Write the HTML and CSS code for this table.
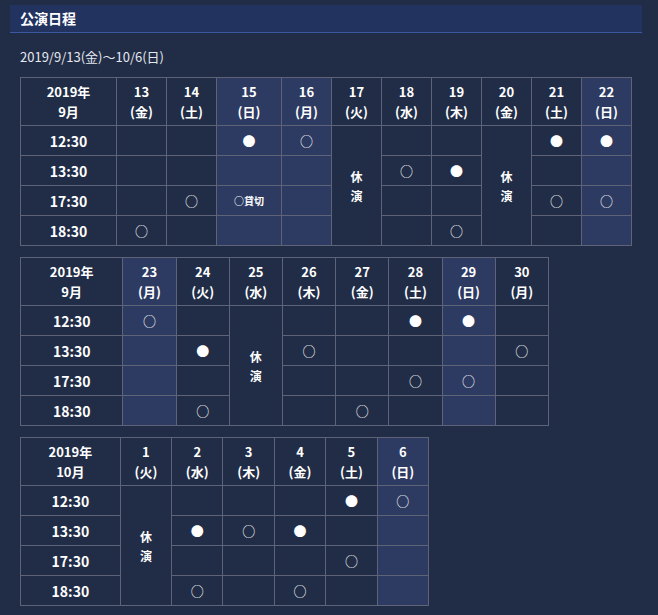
FILE: index.html
```html
<!DOCTYPE html>
<html lang="ja">
<head>
<meta charset="utf-8">
<title>公演日程</title>
<link rel="stylesheet" href="styles.css">
</head>
<body>
<section class="schedule">
  <h2 class="schedule-title">公演日程</h2>
  <p class="period">2019/9/13(金)〜10/6(日)</p>

  <table class="sched sched-1">
    <colgroup>
      <col class="c-head"><col class="c-day"><col class="c-day"><col class="c-wide"><col class="c-day"><col class="c-day"><col class="c-day"><col class="c-day"><col class="c-day"><col class="c-day"><col class="c-day">
    </colgroup>
    <thead>
      <tr>
        <th>2019年<br>9月</th>
        <th>13<br>(金)</th><th>14<br>(土)</th><th class="hol">15<br>(日)</th><th class="hol">16<br>(月)</th><th>17<br>(火)</th><th>18<br>(水)</th><th>19<br>(木)</th><th>20<br>(金)</th><th>21<br>(土)</th><th class="hol">22<br>(日)</th>
      </tr>
    </thead>
    <tbody>
      <tr>
        <th>12:30</th>
        <td></td><td></td><td class="hol">●</td><td class="hol">○</td><td class="off" rowspan="4">休<br>演</td><td></td><td></td><td class="off" rowspan="4">休<br>演</td><td>●</td><td class="hol">●</td>
      </tr>
      <tr>
        <th>13:30</th>
        <td></td><td></td><td class="hol"></td><td class="hol"></td><td>○</td><td>●</td><td></td><td class="hol"></td>
      </tr>
      <tr>
        <th>17:30</th>
        <td></td><td>○</td><td class="hol"><span class="note">○貸切</span></td><td class="hol"></td><td></td><td></td><td>○</td><td class="hol">○</td>
      </tr>
      <tr>
        <th>18:30</th>
        <td>○</td><td></td><td class="hol"></td><td class="hol"></td><td></td><td>○</td><td></td><td class="hol"></td>
      </tr>
    </tbody>
  </table>

  <table class="sched sched-2">
    <colgroup>
      <col class="c-head"><col class="c-day"><col class="c-day"><col class="c-day"><col class="c-day"><col class="c-day"><col class="c-day"><col class="c-day"><col class="c-day">
    </colgroup>
    <thead>
      <tr>
        <th>2019年<br>9月</th>
        <th class="hol">23<br>(月)</th><th>24<br>(火)</th><th>25<br>(水)</th><th>26<br>(木)</th><th>27<br>(金)</th><th>28<br>(土)</th><th class="hol">29<br>(日)</th><th>30<br>(月)</th>
      </tr>
    </thead>
    <tbody>
      <tr>
        <th>12:30</th>
        <td class="hol">○</td><td></td><td class="off" rowspan="4">休<br>演</td><td></td><td></td><td>●</td><td class="hol">●</td><td></td>
      </tr>
      <tr>
        <th>13:30</th>
        <td class="hol"></td><td>●</td><td>○</td><td></td><td></td><td class="hol"></td><td>○</td>
      </tr>
      <tr>
        <th>17:30</th>
        <td class="hol"></td><td></td><td></td><td></td><td>○</td><td class="hol">○</td><td></td>
      </tr>
      <tr>
        <th>18:30</th>
        <td class="hol"></td><td>○</td><td></td><td>○</td><td></td><td class="hol"></td><td></td>
      </tr>
    </tbody>
  </table>

  <table class="sched sched-3">
    <colgroup>
      <col class="c-head"><col class="c-day"><col class="c-day"><col class="c-day"><col class="c-day"><col class="c-day"><col class="c-day">
    </colgroup>
    <thead>
      <tr>
        <th>2019年<br>10月</th>
        <th>1<br>(火)</th><th>2<br>(水)</th><th>3<br>(木)</th><th>4<br>(金)</th><th>5<br>(土)</th><th class="hol">6<br>(日)</th>
      </tr>
    </thead>
    <tbody>
      <tr>
        <th>12:30</th>
        <td class="off" rowspan="4">休<br>演</td><td></td><td></td><td></td><td>●</td><td class="hol">○</td>
      </tr>
      <tr>
        <th>13:30</th>
        <td>●</td><td>○</td><td>●</td><td></td><td class="hol"></td>
      </tr>
      <tr>
        <th>17:30</th>
        <td></td><td></td><td></td><td>○</td><td class="hol"></td>
      </tr>
      <tr>
        <th>18:30</th>
        <td>○</td><td></td><td>○</td><td></td><td class="hol"></td>
      </tr>
    </tbody>
  </table>
</section>
</body>
</html>
```

FILE: styles.css
```css
html, body {
  margin: 0;
  padding: 0;
  background: #212d47;
}

body {
  font-family: "Noto Sans CJK JP", "Noto Sans", "Liberation Sans", sans-serif;
  color: #ffffff;
}

.schedule {
  margin: 5px 16px 0 10px;
}

.schedule-title {
  margin: 0;
  height: 27px;
  line-height: 27px;
  padding: 0 10px;
  font-size: 14px;
  font-weight: 700;
  background: #22335f;
  border-bottom: 1px solid #3b59a0;
}

.period {
  margin: 14px 0 0 10px;
  font-size: 13px;
  line-height: 20px;
  color: #e6e8ee;
}

.sched {
  border-collapse: collapse;
  table-layout: fixed;
  margin: 10px 0 0 10px;
  font-size: 13px;
  font-weight: 700;
  text-align: center;
}

.sched + .sched {
  margin-top: 11px;
}

.sched th,
.sched td {
  border: 1px solid #5e6377;
  padding: 0;
  text-align: center;
  vertical-align: middle;
}

.sched thead th {
  line-height: 20px;
  padding: 4px 0 3px;
  font-weight: 700;
}

.sched tbody th,
.sched tbody td {
  height: 29px;
  line-height: 20px;
}

.sched tbody th {
  font-size: 14px;
  font-weight: 700;
}

.sched tbody td {
  font-weight: 400;
  font-size: 13px;
}

.sched .hol {
  background: #2d3b63;
}

.sched td.off {
  font-size: 12px;
  font-weight: 700;
  line-height: 19px;
}

.note {
  font-size: 10px;
  font-weight: 700;
}

.sched-1 { width: 611px; }
.sched-1 .c-head { width: 96px; }
.sched-1 .c-day { width: 50px; }
.sched-1 .c-wide { width: 65px; }

.sched-2 { width: 529px; }
.sched-2 .c-head { width: 102px; }
.sched-2 .c-day { width: 53px; }

.sched-3 { width: 409px; }
.sched-3 .c-head { width: 99px; }
.sched-3 .c-day { width: 51px; }
```
